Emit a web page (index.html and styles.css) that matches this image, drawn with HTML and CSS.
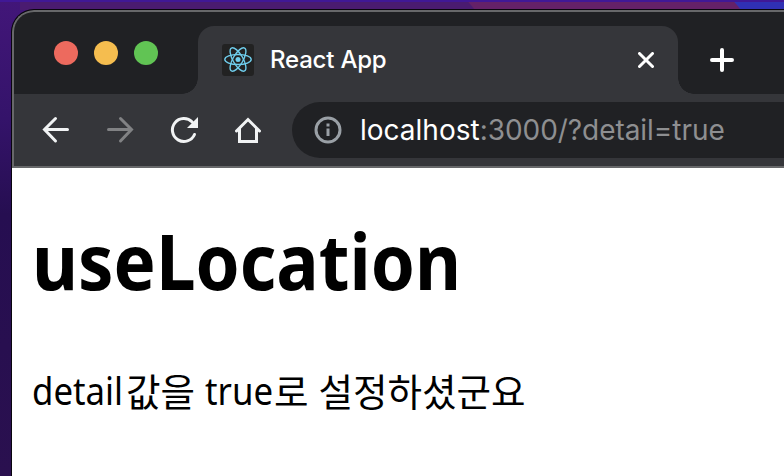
FILE: index.html
```html
<!DOCTYPE html>
<html lang="ko">
<head>
<meta charset="utf-8">
<title>React App</title>
<link rel="stylesheet" href="styles.css">
</head>
<body>
<div class="desktop">
  <div class="window">
    <header class="tabstrip">
      <div class="lights"><i class="red"></i><i class="yellow"></i><i class="green"></i></div>
      <div class="tab">
        <svg class="favicon" viewBox="0 0 32 32" fill="none" stroke="#6fcdec" stroke-width="1.4">
          <rect width="32" height="32" rx="3" fill="#222" stroke="none"/>
          <ellipse cx="16" cy="15.5" rx="13.2" ry="5"/>
          <ellipse cx="16" cy="15.5" rx="13.2" ry="5" transform="rotate(60 16 15.5)"/>
          <ellipse cx="16" cy="15.5" rx="13.2" ry="5" transform="rotate(120 16 15.5)"/>
          <circle cx="16" cy="15.5" r="2.5" fill="#6fcdec" stroke="none"/>
        </svg>
        <span class="tab-title">React App</span>
        <svg class="close" viewBox="0 0 16 16"><path d="M1.5 1.5 14.5 14.5M14.5 1.5 1.5 14.5"/></svg>
      </div>
      <svg class="plus" viewBox="0 0 24 24"><path d="M12 2V22M2 12H22"/></svg>
    </header>
    <nav class="toolbar">
      <svg class="icon" viewBox="0 0 32 32"><path d="M27.5 15.5H5M15.5 4.5 4.5 15.500 15.500 27" /></svg>
      <svg class="icon dim" viewBox="0 0 32 32"><path d="M4.500 15.500H27M16.500 4.500 27.500 15.500 16.500 27"/></svg>
      <svg class="icon" viewBox="0 0 32 32"><path d="M26.500 20.500A11.500 11.500 0 1 1 24.200 8"/><path class="solid" d="M30 3V14H19Z"/></svg>
      <svg class="icon home" viewBox="0 0 32 32"><path d="M4.500 17 16 5.500 27.500 17M7.500 14.500V27.500H24.500V14.500"/></svg>
      <div class="omnibox">
        <svg class="info" viewBox="0 0 28 28"><circle cx="14" cy="14" r="12"/><path d="M14 12.500V20M14 7.500V10.500"/></svg>
        <span class="host">localhost</span><span class="path">:3000/?detail=true</span>
      </div>
    </nav>
    <main class="page">
      <h1>useLocation</h1>
      <p><span class="detail">detail</span><span class="ko">값을</span><span class="true">true</span><span class="ko">로</span><span class="ko last">설정하셨군요</span></p>
    </main>
  </div>
</div>
</body>
</html>
```
FILE: styles.css
```css
*, *::before, *::after { box-sizing: border-box; }
body { margin: 0; overflow: hidden; }
.desktop {
  width: 784px; height: 476px; padding: 10px 0 0 12px; overflow: hidden;
  background:
    linear-gradient(#401896, #401896) 0 0 / 100% 2px no-repeat,
    linear-gradient(50deg, transparent 0 8px, #3030b4 9px) 730px 0 / 54px 10px no-repeat,
    linear-gradient(50deg, transparent 0 8px, #642168 9px) 464px 0 / 278px 10px no-repeat,
    linear-gradient(#4a1b70, #4a1b70) 20px 0 / 764px 10px no-repeat,
    linear-gradient(#421679, #34136a 25%, #260e51 45%, #2a104f);
}
.window {
  position: relative; width: 800px; height: 480px; overflow: hidden;
  border-radius: 22px 0 0 0; background: #202124; box-shadow: 0 0 0 1px #09050e;
}
.window::after {
  content: ""; position: absolute; inset: 0 0 auto 0; height: 158px;
  border: solid #67686a; border-width: 2px 0 2px 2px; border-radius: 22px 0 0 0;
}
.tabstrip { display: flex; height: 84px; padding-top: 16px; }
.lights { display: flex; gap: 16px; width: 186px; padding: 15px 0 0 42px; }
.lights i { width: 24px; height: 24px; border-radius: 50%; }
.red { background: #ed6a5e; }
.yellow { background: #f5bd4f; }
.green { background: #61c454; }
.tab {
  position: relative; display: flex; align-items: center; width: 480px; height: 68px;
  padding: 0 24px; border-radius: 16px 16px 0 0; background: #35363a;
}
.tab::before, .tab::after {
  content: ""; position: absolute; bottom: 0; width: 16px; height: 16px;
}
.tab::before { left: -16px; background: radial-gradient(circle at 0 0, transparent 15.5px, #35363a 16px); }
.tab::after { right: -16px; background: radial-gradient(circle at 100% 0, transparent 15.5px, #35363a 16px); }
.favicon { width: 32px; height: 32px; }
.tab-title { margin-left: 16px; color: #fff; font: 450 24px/32px Inter, sans-serif; letter-spacing: -0.2px; }
.close { width: 16px; height: 16px; margin-left: auto; fill: none; stroke: #fff; stroke-width: 3; stroke-linecap: round; }
.plus { width: 24px; height: 24px; margin: 22px 0 0 32px; fill: none; stroke: #fff; stroke-width: 4; stroke-linecap: round; }
.toolbar { display: flex; align-items: center; height: 74px; padding: 0 0 2px 28px; background: #35363a; }
.icon { width: 32px; height: 32px; margin-right: 32px; fill: none; stroke: #f1f3f4; stroke-width: 3; stroke-linecap: round; }
.icon .solid { fill: #f1f3f4; stroke: none; }
.dim { stroke: #818284; }
.home { margin-right: 28px; }
.omnibox {
  display: flex; align-items: center; flex: 1; height: 56px; padding-left: 22px;
  border-radius: 28px 0 0 28px; background: #202124; font: 400 28px/36px Inter, sans-serif; white-space: nowrap;
}
.info { width: 28px; height: 28px; margin-right: 18px; fill: none; stroke: #9aa0a6; stroke-width: 3; }
.host { color: #fff; }
.path { color: #8e8f91; letter-spacing: -0.05px; }
.page { height: 330px; padding: 39px 0 0 20px; background: #fff; color: #000; font-family: "Noto Sans", "Noto Sans CJK KR", sans-serif; }
h1 { width: max-content; margin: 0; font-size: 77px; font-weight: 700; line-height: 108px; transform: scaleX(0.92); transform-origin: 0 0; }
p { display: flex; margin: 48px 0 0; font-size: 38px; line-height: 54px; white-space: nowrap; }
.detail, .true { transform: scaleX(0.915); transform-origin: 0 0; }
.detail { width: 94px; }
.true { width: 69px; margin-left: 10px; }
.ko { font-family: "Noto Sans CJK KR", sans-serif; font-size: 37.5px; }
.last { margin-left: 10px; }
```
